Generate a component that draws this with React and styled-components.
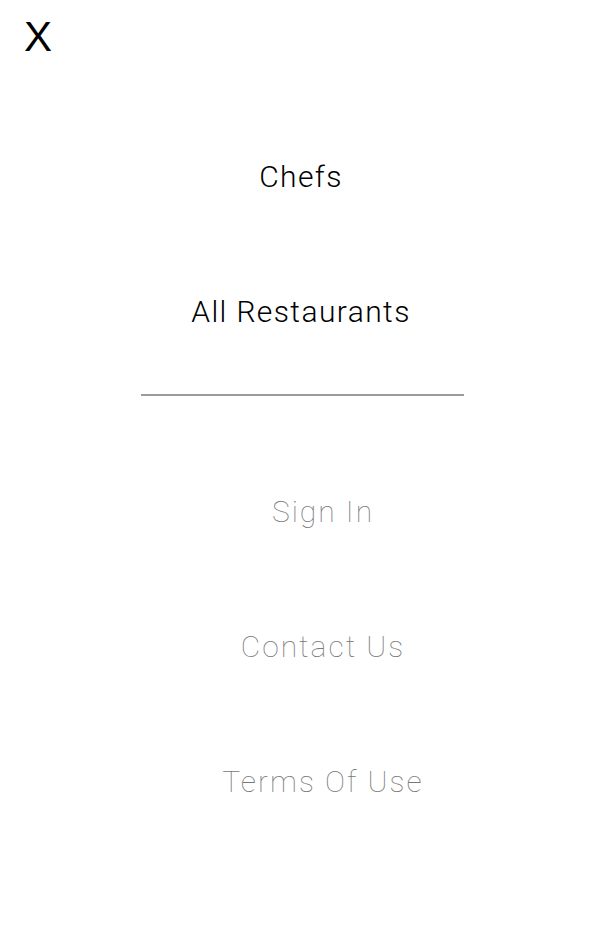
import React from "react";
import styled, { createGlobalStyle } from "styled-components";

const GlobalStyle = createGlobalStyle`
  html, body {
    margin: 0;
    padding: 0;
    background: #ffffff;
  }
  body {
    font-family: "Roboto", "Liberation Sans", Arial, sans-serif;
  }
`;

const mainLinks = ["Chefs", "All Restaurants"];
const secondaryLinks = ["Sign In", "Contact Us", "Terms Of Use"];

function App() {
  return (
    <Root>
      <GlobalStyle />
      <CloseButton aria-label="Close">X</CloseButton>
      <MainNav>
        {mainLinks.map((label) => (
          <NavItem key={label}>{label}</NavItem>
        ))}
      </MainNav>
      <Divider />
      <SecondaryNav>
        {secondaryLinks.map((label) => (
          <NavItem key={label} $muted>
            {label}
          </NavItem>
        ))}
      </SecondaryNav>
    </Root>
  );
}

const Root = styled.div`
  display: flex;
  flex-direction: column;
  width: 598px;
  height: 943px;
  background-color: #ffffff;
  overflow: hidden;
`;

const CloseButton = styled.button`
  align-self: flex-start;
  margin: 16px 0 0 24px;
  padding: 0;
  border: none;
  background: none;
  font-family: "Liberation Sans", Arial, sans-serif;
  font-size: 42px;
  line-height: 42px;
  color: #000000;
  cursor: pointer;
`;

const MainNav = styled.nav`
  display: flex;
  flex-direction: column;
  margin-top: 51px;
  padding-left: 4px;
`;

const NavItem = styled.a`
  display: block;
  height: 135px;
  line-height: 135px;
  text-align: center;
  font-family: "Roboto", "Liberation Sans", Arial, sans-serif;
  font-weight: ${(p) => (p.$muted ? 100 : 300)};
  font-size: 30px;
  letter-spacing: ${(p) => (p.$muted ? "2px" : "1.4px")};
  color: ${(p) => (p.$muted ? "#777777" : "#000000")};
  cursor: pointer;
`;

const Divider = styled.div`
  width: 323px;
  height: 2px;
  margin: 15px 0 0 141px;
  background-color: #9b9b9b;
`;

const SecondaryNav = styled.nav`
  display: flex;
  flex-direction: column;
  margin-top: 48px;
  padding-left: 48px;
`;

export default App;
